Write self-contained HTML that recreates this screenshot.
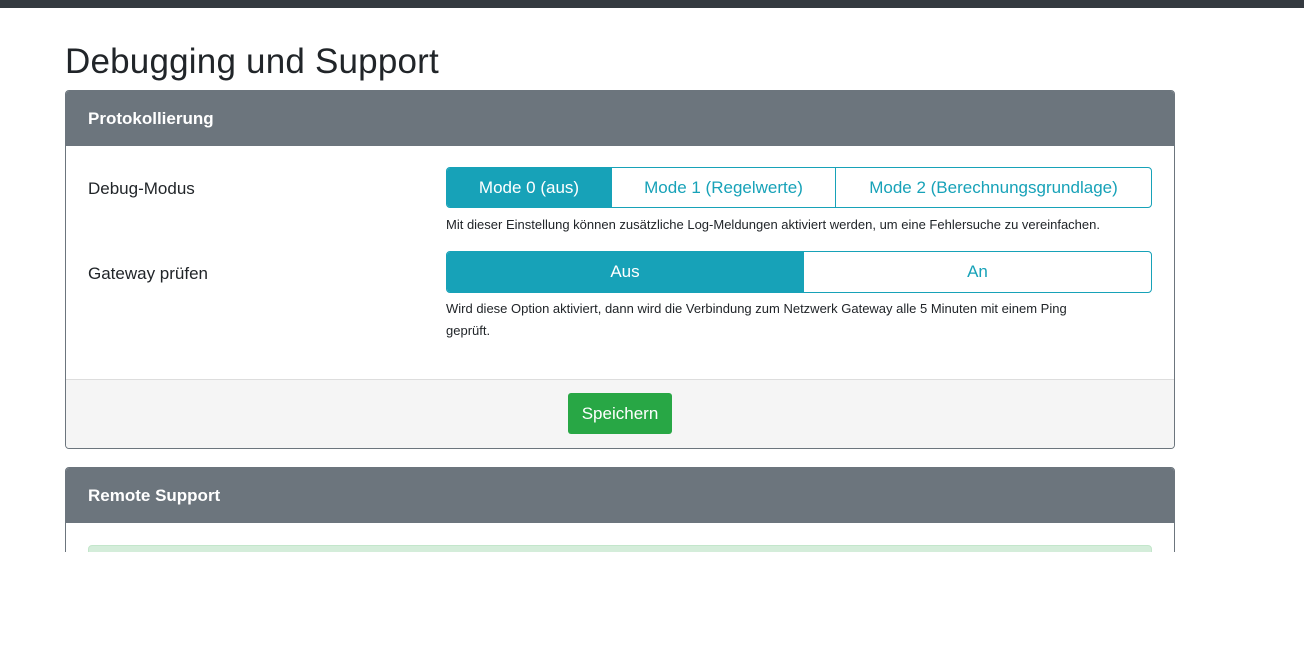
<!DOCTYPE html>
<html><head><meta charset="utf-8"><style>
*{box-sizing:border-box;margin:0;padding:0}
body{width:1304px;height:648px;background:#fff;font-family:"Liberation Sans",sans-serif;color:#212529;position:relative;overflow:hidden}
.top{position:absolute;left:0;top:0;width:1304px;height:8px;background:#343a40}
h1{position:absolute;left:65px;top:42px;font-size:35px;font-weight:400;letter-spacing:0.2px}
.card{position:absolute;left:65px;width:1110px;border:1px solid #6c757d;border-radius:4px;overflow:hidden;background:#fff}
.hd{background:#6c757d;color:#fff;font-weight:bold;font-size:17px;height:55px;line-height:55px;padding-left:22px}
.abs{position:absolute}
.lbl{font-size:17px;color:#212529}
.grp{position:absolute;display:flex;border:1px solid #17a2b8;border-radius:4px;overflow:hidden}
.grp div{display:flex;align-items:center;justify-content:center;color:#17a2b8;font-size:17px;border-left:1px solid #17a2b8}
.grp div:first-child{border-left:none}
.grp .on{background:#17a2b8;color:#fff}
.help{font-size:13px;color:#212529;line-height:22px}
.ft{position:absolute;left:0;top:288px;width:100%;height:70px;background:#f5f5f5;border-top:1px solid #ddd}
.btn{position:absolute;left:502px;top:13px;width:104px;height:41px;background:#28a745;color:#fff;border-radius:3px;font-size:17px;display:flex;align-items:center;justify-content:center}
</style></head><body>
<div class="top"></div>
<h1>Debugging und Support</h1>
<div class="card" style="top:90px;height:359px">
<div class="hd">Protokollierung</div>
<div class="abs lbl" style="left:22px;top:88px">Debug-Modus</div>
<div class="grp" style="left:380px;top:76px;width:706px;height:41px">
<div class="on" style="width:164px">Mode 0 (aus)</div>
<div style="width:224px">Mode 1 (Regelwerte)</div>
<div style="flex:1">Mode 2 (Berechnungsgrundlage)</div>
</div>
<div class="abs help" style="left:380px;top:123px">Mit dieser Einstellung können zusätzliche Log-Meldungen aktiviert werden, um eine Fehlersuche zu vereinfachen.</div>
<div class="abs lbl" style="left:22px;top:173px">Gateway prüfen</div>
<div class="grp" style="left:380px;top:160px;width:706px;height:42px">
<div class="on" style="width:356px">Aus</div>
<div style="flex:1">An</div>
</div>
<div class="abs help" style="left:380px;top:207px;width:660px">Wird diese Option aktiviert, dann wird die Verbindung zum Netzwerk Gateway alle 5 Minuten mit einem Ping geprüft.</div>
<div class="ft"><div class="btn">Speichern</div></div>
</div>
<div class="card" style="top:467px;height:120px">
<div class="hd">Remote Support</div>
<div class="abs" style="left:22px;top:77px;width:1064px;height:40px;background:#d4edda;border:1px solid #c3e6cb;border-radius:4px"></div>
</div>
<div class="abs" style="left:0;top:552px;width:1304px;height:96px;background:#fff"></div>
</body></html>
